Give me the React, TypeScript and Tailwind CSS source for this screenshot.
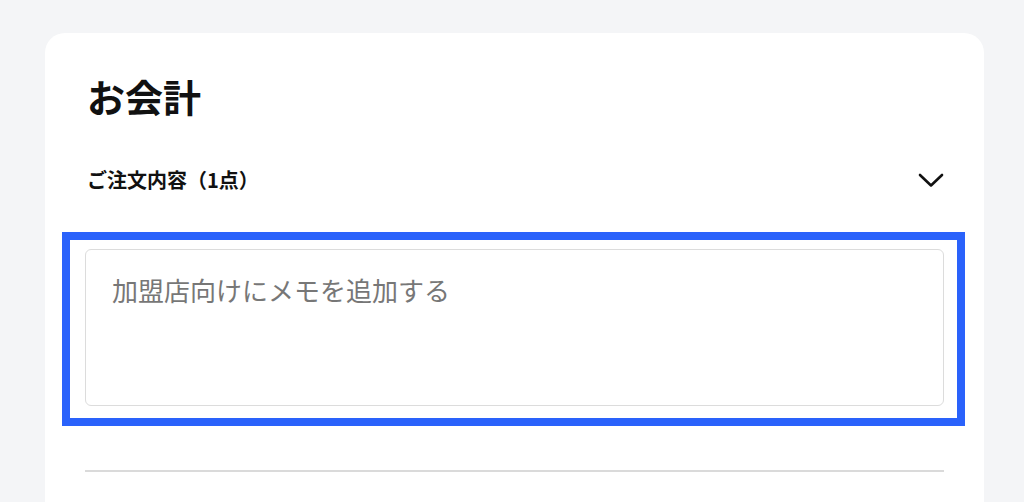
import React from "react";

export default function App() {
  return (
    <div
      className="min-h-[502px] w-[1024px] overflow-hidden bg-[#f4f5f7] pt-[33px]"
      style={{ fontFamily: '"Noto Sans CJK JP", "Noto Sans", sans-serif' }}
    >
      <div className="ml-[45px] h-[480px] w-[939px] rounded-t-[20px] bg-white px-[40px] pt-[44px]">
        <h1 className="ml-[2px] text-[38px] font-bold leading-none text-[#111]">お会計</h1>
        <div className="mt-[55px] flex items-center justify-between">
          <span className="ml-[2px] text-[20px] font-bold leading-none text-[#111]">ご注文内容（1点）</span>
          <svg width="26" height="16" viewBox="0 0 26 16" fill="none">
            <polyline
              points="2,3 13,13.5 24,3"
              stroke="#111"
              strokeWidth="2.6"
              strokeLinecap="round"
              strokeLinejoin="round"
            />
          </svg>
        </div>
        <div className="relative mt-[59px]">
          <textarea
            className="block h-[157px] w-full resize-none rounded-[6px] border border-[#dcdcdc] bg-white px-[26px] pt-[27px] text-[26px] leading-none text-[#111] outline-none placeholder:text-[#777]"
            placeholder="加盟店向けにメモを追加する"
            style={{ fontFamily: '"Noto Sans CJK JP", sans-serif' }}
          />
          <div className="pointer-events-none absolute -left-[23px] -right-[21px] -top-[17px] -bottom-[20px] border-[8px] border-[#2a62fb]" />
        </div>
        <div className="mt-[64px] h-[2px] bg-[#dadada]" />
      </div>
    </div>
  );
}
